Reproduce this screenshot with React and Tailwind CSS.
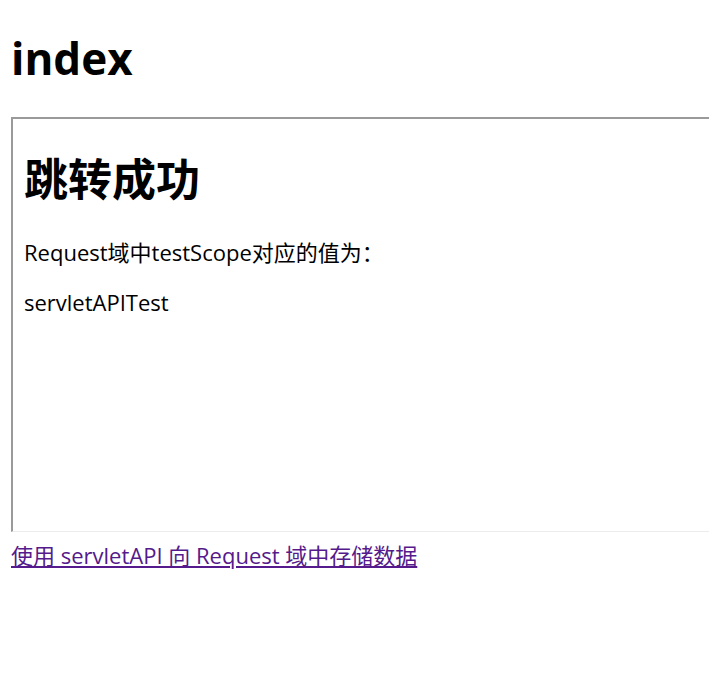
import React from 'react';

const sans = { fontFamily: '"Open Sans", "Noto Sans CJK SC", sans-serif' };

const Frame = () => (
    <div className="w-[820px] h-[415px] shrink-0 border-t-2 border-l-2 border-t-[#9a9a9a] border-l-[#9a9a9a] border-b border-b-[#ececec] bg-white">
        <div className="px-[11px] pt-[11px]">
            <h1 className="text-[44px] font-bold leading-[52px] mt-[23px] mb-[33px] text-black">跳转成功</h1>
            <p className="text-[22px] leading-[28px] mb-[22px]">Request域中testScope对应的值为：</p>
            <p className="text-[22px] leading-[28px]">servletAPITest</p>
        </div>
    </div>
);

export default function App() {
    return (
        <div className="w-[709px] h-[676px] overflow-hidden bg-white text-black p-[11px]" style={sans}>
            <h1 className="text-[44px] font-bold leading-[52px] mt-[21px] mb-[33px]">index</h1>
            <Frame />
            <div className="mt-[9px] leading-[28px]">
                <a href="#" className="text-[22px] leading-[28px] text-[#551a8b] underline">
                    使用 servletAPI 向 Request 域中存储数据
                </a>
            </div>
        </div>
    );
}
